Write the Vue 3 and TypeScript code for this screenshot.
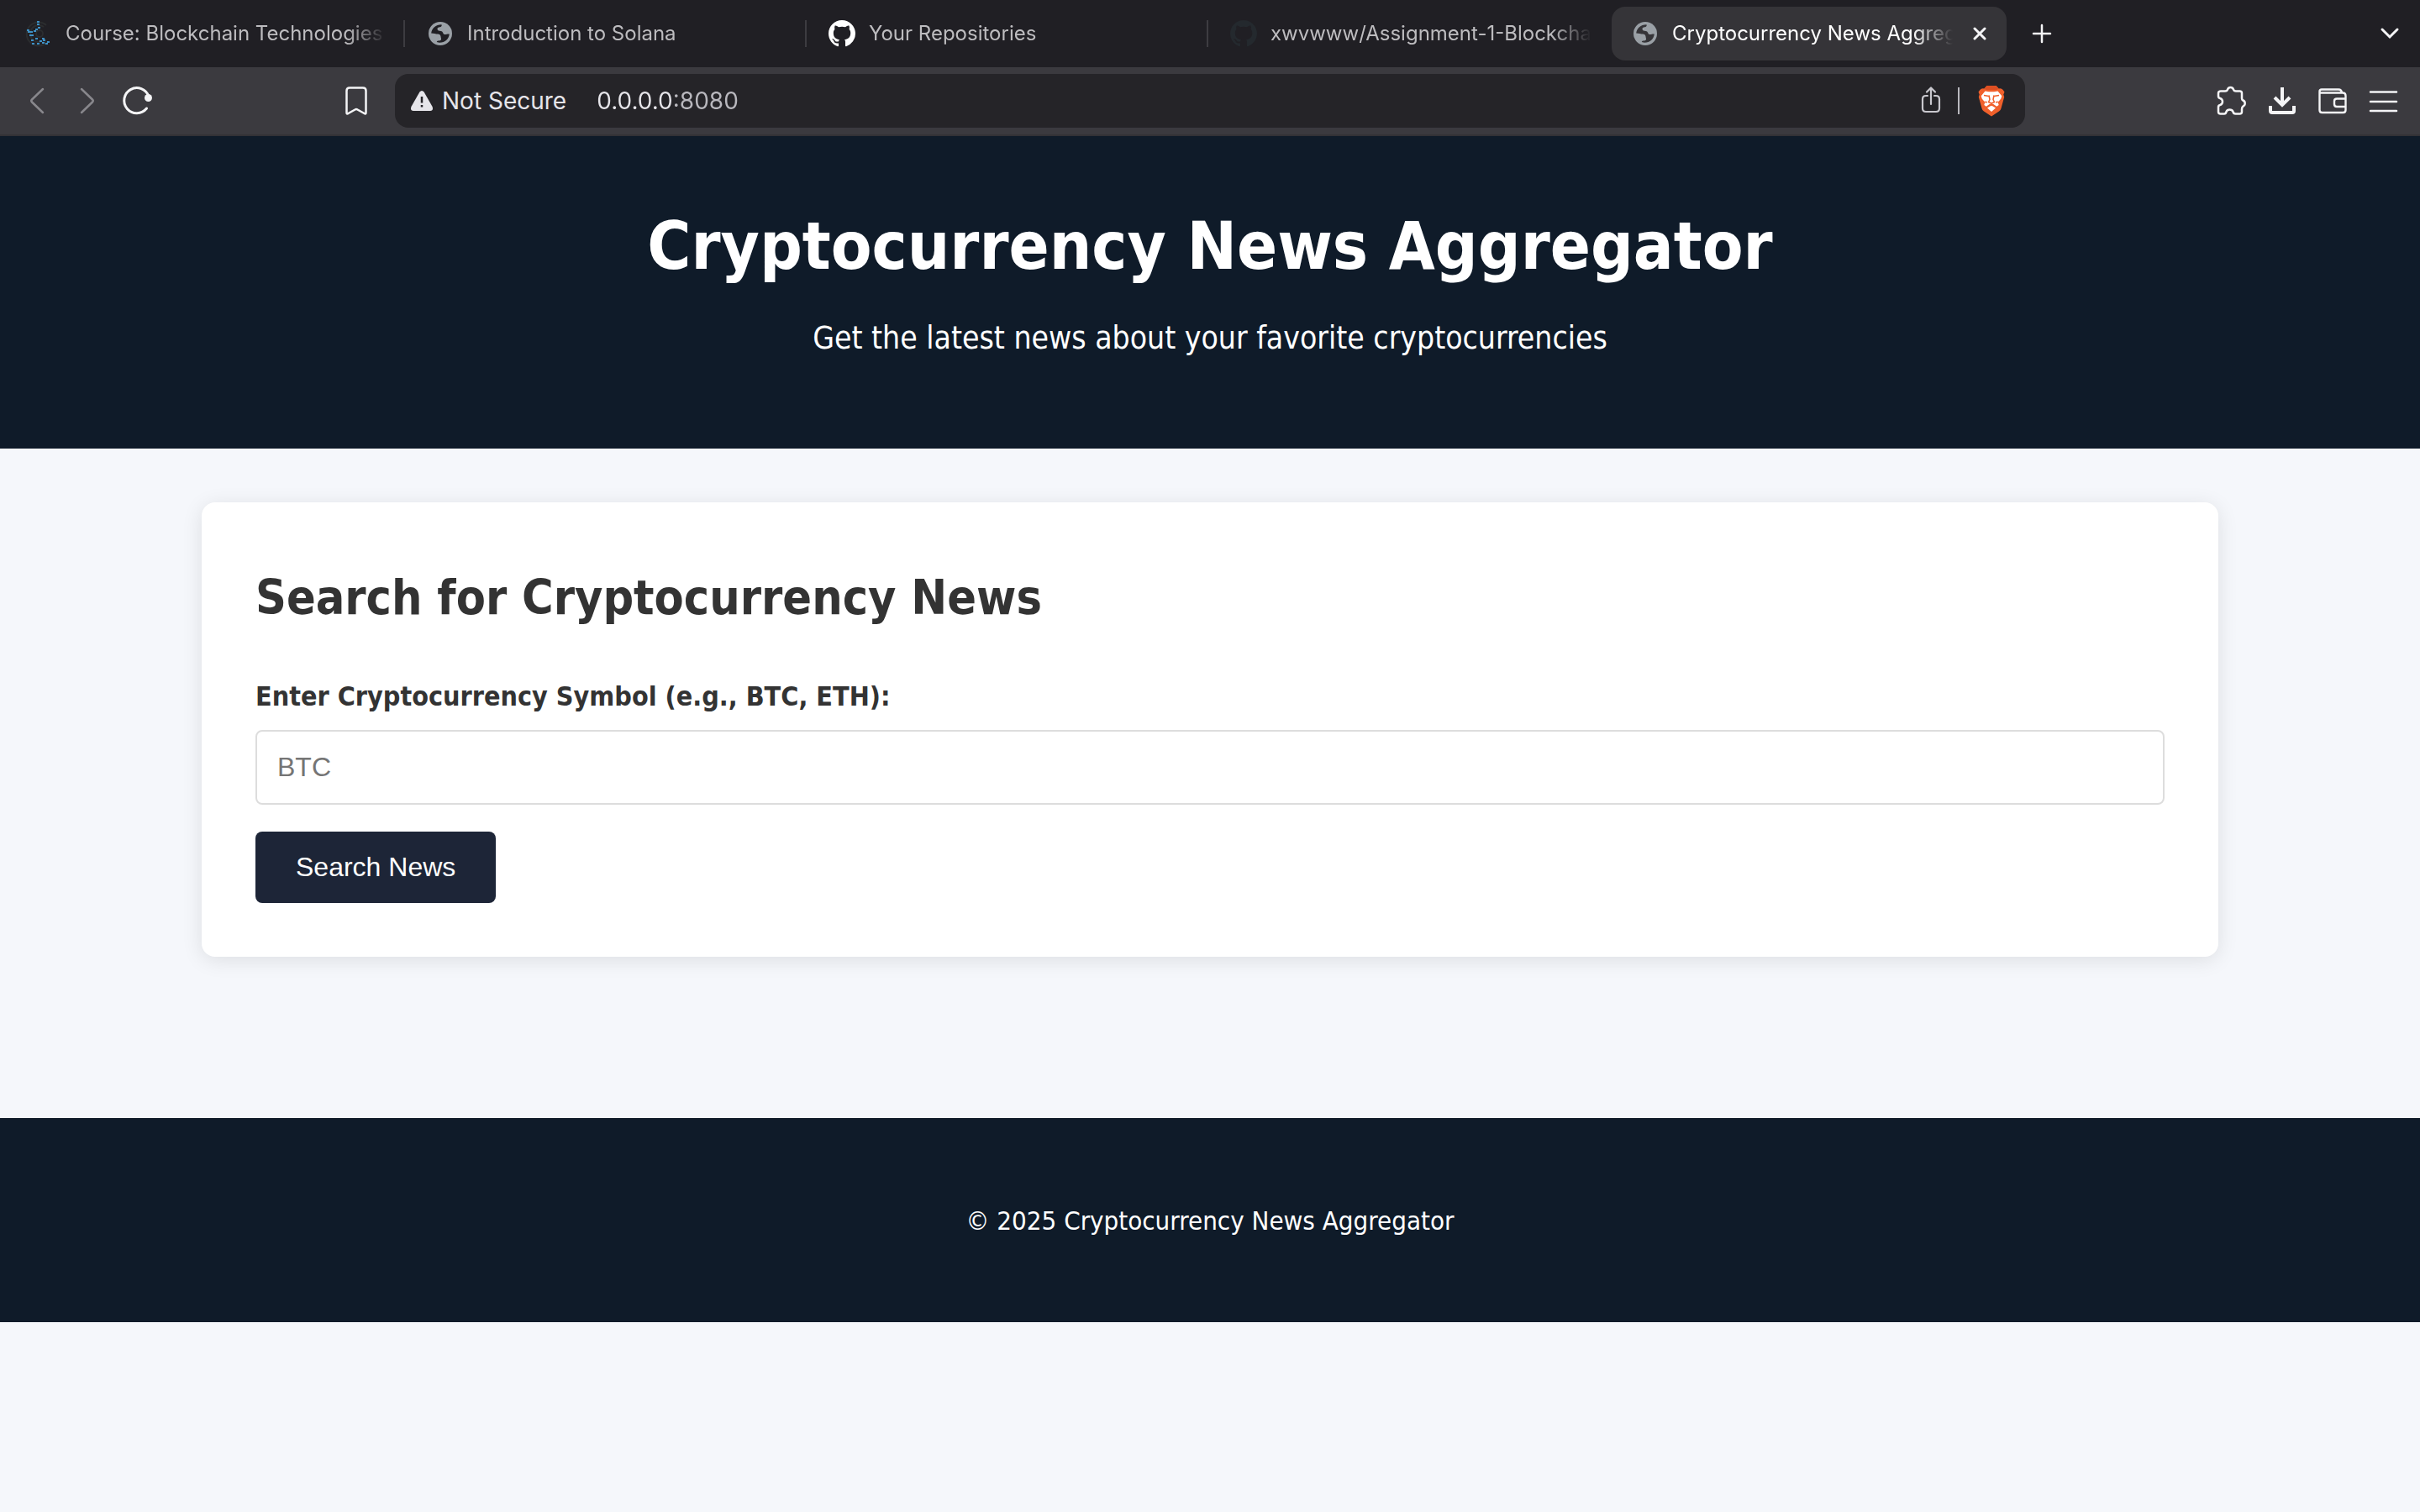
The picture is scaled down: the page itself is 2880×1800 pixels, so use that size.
<script setup lang="ts">
import { ref } from 'vue'

type Favicon = 'course' | 'globe' | 'github' | 'github-dark'

interface Tab {
  title: string
  icon: Favicon
}

const tabs: Tab[] = [
  { title: 'Course: Blockchain Technologies', icon: 'course' },
  { title: 'Introduction to Solana', icon: 'globe' },
  { title: 'Your Repositories', icon: 'github' },
  { title: 'xwvwww/Assignment-1-Blockchain', icon: 'github-dark' },
  { title: 'Cryptocurrency News Aggregator', icon: 'globe' },
]
const activeTab = ref(4)

const courseDots: [number, number][] = [
  [14, 1], [14, 4], [15, 8], [12, 10], [2, 11], [3, 13], [6, 13], [10, 12], [5, 17], [7, 17],
  [12, 21], [7, 23], [8, 27], [14, 27], [17, 24], [20, 21], [21, 23], [20, 26], [24, 27], [26, 25],
]

const address = ref('0.0.0.0:8080')
const symbol = ref('')
</script>

<template>
  <div class="browser">
    <nav class="tab-strip" aria-label="Tabs">
      <div v-for="(tab, i) in tabs" :key="i" class="tab" :class="{ active: i === activeTab }">
        <button class="tab-main" type="button" @click="activeTab = i">
          <svg v-if="tab.icon === 'course'" class="favicon" viewBox="0 0 32 32" aria-hidden="true">
            <g fill="none" stroke="#2b2d2f" stroke-width="2">
              <path d="M25 6A14 14 0 1 0 26 26" />
              <path d="M22 8A10 10 0 1 0 24 22" />
              <circle cx="17" cy="16" r="4" />
            </g>
            <rect v-for="([x, y], d) in courseDots" :key="d" :x="x" :y="y" width="3" height="2" fill="#3d8fc4" />
          </svg>
          <svg v-else-if="tab.icon === 'globe'" class="favicon" viewBox="-2 -2 32 32" aria-hidden="true">
            <circle cx="14" cy="14" r="14" fill="#9aa0a6" />
            <path
              class="globe-cut"
              d="M3.2 13.5C3.8 7.500 8.500 3.400 15.500 3.200 16.200 5 15 6 13.500 6.200 11.500 6.500 10.300 7.200 10.500 8.800 10.700 10.500 12.500 11 14.500 11 17.500 11 16.800 14.600 19 15 21 15.400 22 14.200 24.800 14.500 24.200 20 20 24.800 13 24.800L9.800 24C10 22.500 11 22.600 12.500 22.500 14.500 22.400 15.200 21.500 15 20 14.800 19 14.600 18.500 14.500 17.500 14.300 15.500 13 14.500 11 14.500 9 14.500 6 13.800 3.200 13.500Z"
            />
          </svg>
          <svg v-else class="favicon" viewBox="0 0 16 16" aria-hidden="true">
            <path
              :fill="tab.icon === 'github' ? '#ffffff' : '#24292e'"
              d="M8 0C3.580 0 0 3.580 0 8c0 3.540 2.290 6.530 5.470 7.590.4.070.550-.170.550-.380 0-.190-.010-.820-.010-1.490-2.010.370-2.530-.490-2.690-.940-.090-.230-.480-.940-.820-1.130-.280-.150-.680-.520-.010-.530.630-.010 1.080.580 1.230.820.720 1.210 1.870.870 2.330.660.070-.520.280-.870.510-1.070-1.780-.2-3.640-.890-3.640-3.950 0-.870.310-1.590.820-2.150-.080-.2-.360-1.020.080-2.120 0 0 .670-.210 2.200.820.640-.180 1.320-.270 2-.270s1.360.090 2 .270c1.530-1.040 2.200-.820 2.200-.820.440 1.100.160 1.920.080 2.120.510.560.820 1.270.820 2.150 0 3.070-1.870 3.750-3.650 3.950.290.250.540.730.540 1.480 0 1.070-.010 1.930-.010 2.200 0 .210.150.460.550.380A8.010 8.010 0 0 0 16 8c0-4.420-3.580-8-8-8Z"
            />
          </svg>
          <span class="tab-title">{{ tab.title }}</span>
        </button>
        <button v-if="i === activeTab" class="tab-close" type="button" aria-label="Close tab">
          <svg width="16" height="16" viewBox="0 0 16 16" aria-hidden="true">
            <path d="M2 2l12 12M14 2 2 14" stroke="#f4f4f6" stroke-width="3" stroke-linecap="round" />
          </svg>
        </button>
      </div>
      <button class="icon-button new-tab" type="button" aria-label="New tab">
        <svg width="24" height="24" viewBox="0 0 24 24" aria-hidden="true">
          <path d="M12 2v20M2 12h20" stroke="#f4f4f6" stroke-width="2.500" stroke-linecap="round" />
        </svg>
      </button>
      <button class="icon-button tab-search" type="button" aria-label="Search tabs">
        <svg width="24" height="24" viewBox="0 0 24 24" fill="none" aria-hidden="true">
          <path d="M3 7l9 9 9-9" stroke="#f4f4f6" stroke-width="3" stroke-linecap="round" />
        </svg>
      </button>
    </nav>

    <div class="toolbar">
      <div class="tools">
        <button class="icon-button" type="button" aria-label="Back">
          <svg width="40" height="40" viewBox="0 0 40 40" fill="none" aria-hidden="true">
            <path d="M27 6 14 18.500Q12.500 20 14 21.500L27 34" stroke="#88878c" stroke-width="2.500" stroke-linecap="round" />
          </svg>
        </button>
        <button class="icon-button" type="button" aria-label="Forward">
          <svg width="40" height="40" viewBox="0 0 40 40" fill="none" aria-hidden="true">
            <path d="M13 6 26 18.500Q27.500 20 26 21.500L13 34" stroke="#88878c" stroke-width="2.500" stroke-linecap="round" />
          </svg>
        </button>
        <button class="icon-button" type="button" aria-label="Reload">
          <svg width="40" height="40" viewBox="0 0 40 40" fill="none" aria-hidden="true">
            <path d="M33 15A15 15 0 1 0 30.500 29" stroke="#f4f4f6" stroke-width="3" stroke-linecap="round" />
            <circle cx="32.500" cy="16.500" r="4.500" fill="#f4f4f6" />
          </svg>
        </button>
        <button class="icon-button bookmark" type="button" aria-label="Bookmark this page">
          <svg width="40" height="40" viewBox="0 0 40 40" fill="none" aria-hidden="true">
            <path
              d="M12 4.500h16Q31.500 4.500 31.500 8v26q0 2.500-2 1L21.500 30.500Q20 29.500 18.500 30.500L10.500 35q-2 1.500-2-1V8Q8.500 4.500 12 4.500Z"
              stroke="#f4f4f6"
              stroke-width="2.500"
            />
          </svg>
        </button>
      </div>

      <div class="address-bar">
        <button class="security" type="button">
          <svg width="28" height="26" viewBox="0 0 28 26" aria-hidden="true">
            <path d="M11.400 2.500Q14-.5 16.600 2.500L26.600 20Q28 25 24 25H4Q0 25 1.400 20Z" fill="#e6e5ea" />
            <path d="M14 8v7.500M14 18v2.500" stroke="#252428" stroke-width="2.500" />
          </svg>
          <span>Not Secure</span>
        </button>
        <input v-model="address" class="address" type="text" aria-label="Address" spellcheck="false" />
        <button class="icon-button" type="button" aria-label="Share">
          <svg width="40" height="40" viewBox="0 0 40 40" fill="none" stroke="#c9c8ce" stroke-width="2.200" stroke-linecap="round" stroke-linejoin="round" aria-hidden="true">
            <path d="M16 14h-2q-4 0-4 4v11q0 4 4 4h12q4 0 4-4V18q0-4-4-4h-2" />
            <path d="M20 24V5M15 9.500l5-5 5 5" />
          </svg>
        </button>
        <span class="divider"></span>
        <button class="icon-button" type="button" aria-label="Brave Shields">
          <svg width="40" height="40" viewBox="0 0 40 40" aria-hidden="true">
            <path
              d="M14.500 2h11l3.200 3.500q3.300-.6 5 1.500l1.800 2.500-1.200 3 .9 3L31.500 29Q31 31 29 32.500L20 38.500 11 32.500Q9 31 8.500 29L4.800 15.500l.9-3-1.200-3L6.300 7q1.700-2.100 5-1.500Z"
              fill="#f0602b"
            />
            <path d="M14.500 2h11l3.200 3.500L26 7H14l-2.700-1.500Z" fill="#dd4f22" />
            <path
              d="M12.500 8.500 17 9.200h6l4.500-.7 4.800 5.700-1 3.300-3.600 4.300 1 3.200-2.500 1.700-4.200-3h-4l-4.200 3-2.500-1.700 1-3.200-3.600-4.300-1-3.300Z"
              fill="#fff"
            />
            <path d="M15 28.500 20 25.500l5 3-5 4.500Z" fill="#fff" />
            <path
              d="M11 13.500 17 14.500M29 13.500 23 14.500M17 13.500l1 5-1.500 3 3.500 1.500 3.500-1.500-1.500-3 1-5M20 23v3"
              fill="none"
              stroke="#f0602b"
              stroke-width="1.500"
              stroke-linejoin="round"
            />
            <path d="M11.500 20.500l4 .5-2 2Z M28.500 20.500l-4 .5 2 2Z" fill="#f0602b" />
          </svg>
        </button>
      </div>

      <div class="tools tools-end">
        <button class="icon-button" type="button" aria-label="Extensions">
          <svg width="40" height="40" viewBox="0 0 40 40" fill="none" stroke="#f4f4f6" stroke-width="2.500" stroke-linejoin="round" aria-hidden="true">
            <path
              d="M7 8.500h5q2.500 0 3-2Q16 4 18.500 4T22 6.500q.5 2 3 2h4.500q2.500 0 2.500 2.500v5.500q0 2.500 1.500 3 2.200 1 2.200 3.500t-2.200 3.500Q32 27.500 32 30v3q0 2.500-2.500 2.500h-5q-2.500 0-3-2.500-1-2.500-4-2.500t-4 2.500q-.5 2.500-2.500 2.500H6.500Q4 35.500 4 33v-5.500q0-2 2-2.500 3-1 3-4t-3-4q-2-.5-2-2.500V11Q4 8.500 7 8.500Z"
            />
          </svg>
        </button>
        <button class="icon-button" type="button" aria-label="Downloads">
          <svg width="40" height="40" viewBox="0 0 40 40" fill="none" stroke="#f4f4f6" stroke-width="4" aria-hidden="true">
            <path d="M20 4v21M11 16l9 9 9-9" />
            <path d="M6 26v6q0 2 2 2h24q2 0 2-2v-6" />
          </svg>
        </button>
        <button class="icon-button" type="button" aria-label="Wallet">
          <svg width="40" height="40" viewBox="0 0 40 40" fill="none" stroke="#f4f4f6" stroke-width="2.400" stroke-linejoin="round" aria-hidden="true">
            <path d="M4.500 10.500V31q0 3 3 3h25q3 0 3-3V14q0-3.500-3.500-3.500H4.500V9q0-2.500 2.500-2.500h20q3.500 0 4 4" />
            <path d="M35.500 17.500H25q-3 0-3 3v3.500q0 3 3 3h10.500" />
          </svg>
        </button>
        <button class="icon-button" type="button" aria-label="Menu">
          <svg width="40" height="40" viewBox="0 0 40 40" aria-hidden="true">
            <path d="M5 9.500h31M5 21h31M5 32h31" stroke="#f4f4f6" stroke-width="2.500" stroke-linecap="round" />
          </svg>
        </button>
      </div>
    </div>

    <header class="hero">
      <h1>Cryptocurrency News Aggregator</h1>
      <p>Get the latest news about your favorite cryptocurrencies</p>
    </header>

    <main class="content">
      <section class="card">
        <h2>Search for Cryptocurrency News</h2>
        <form @submit.prevent>
          <label for="symbol">Enter Cryptocurrency Symbol (e.g., BTC, ETH):</label>
          <input id="symbol" v-model="symbol" class="symbol" type="text" placeholder="BTC" />
          <button class="submit" type="submit">Search News</button>
        </form>
      </section>
    </main>

    <footer class="footer">
      <p>© 2025 Cryptocurrency News Aggregator</p>
    </footer>
  </div>
</template>

<style>
body {
  margin: 0;
  background: #f5f7fb;
}
</style>

<style scoped>
.browser {
  color: #333;
  font-family: 'DejaVu Sans Condensed', 'DejaVu Sans', sans-serif;
}

button {
  margin: 0;
  padding: 0;
  border: 0;
  background: none;
  color: inherit;
  font: inherit;
}

svg {
  display: block;
  flex: none;
}

h1,
h2,
p {
  margin: 0;
}

/* Tab strip */
.tab-strip {
  display: flex;
  align-items: center;
  height: 80px;
  padding: 0 16px 0 4px;
  background: #201f24;
  color: #bdbcbf;
  font-family: Inter, sans-serif;
  font-size: 24px;
}

.tab {
  display: flex;
  align-items: center;
  box-sizing: border-box;
  flex: 0 1 478px;
  min-width: 0;
  height: 32px;
  padding: 0 20px 0 26px;
  border-right: 2px solid #3d3c41;
}

.tab:nth-child(4) {
  border-right-color: transparent;
}

.tab.active {
  flex-basis: 470px;
  height: 64px;
  margin-left: 2px;
  padding: 0 24px;
  border: 0;
  border-radius: 16px;
  background: #353438;
  color: #fff;
}

.tab-main {
  display: flex;
  flex: 1;
  align-items: center;
  gap: 16px;
  min-width: 0;
  text-align: left;
}

.favicon {
  width: 32px;
  height: 32px;
}

.globe-cut {
  fill: #201f24;
}

.active .globe-cut {
  fill: #353438;
}

.tab-title {
  flex: 1;
  overflow: hidden;
  line-height: 32px;
  white-space: nowrap;
  mask-image: linear-gradient(90deg, #000 calc(100% - 48px), transparent);
}

.tab-close {
  margin-left: 24px;
}

.icon-button {
  display: grid;
  flex: none;
  place-items: center;
  width: 40px;
  height: 40px;
}

.new-tab {
  margin-left: 22px;
}

.tab-search {
  margin-left: auto;
}

/* Toolbar */
.toolbar {
  display: grid;
  grid-template-columns: 470px 1fr 470px;
  align-items: center;
  height: 80px;
  border-bottom: 2px solid #333236;
  background: #3b3a3f;
  font-family: Inter, sans-serif;
  font-size: 28px;
}

.tools {
  display: flex;
  gap: 20px;
  padding: 0 26px 0 24px;
}

.tools-end {
  justify-content: flex-end;
  padding: 0 24px;
}

.bookmark {
  margin-left: auto;
}

.address-bar {
  display: flex;
  align-items: center;
  height: 64px;
  padding: 0 20px 0 18px;
  border-radius: 16px;
  background: #252428;
  color: #e6e5ea;
}

.security {
  display: flex;
  align-items: center;
  gap: 10px;
}

.address {
  flex: 1;
  min-width: 0;
  margin: 0 0 0 36px;
  padding: 0;
  border: 0;
  outline: 0;
  background: linear-gradient(90deg, #e6e5ea 92px, #b9b8be 92px);
  background-clip: text;
  color: transparent;
  font: inherit;
}

.divider {
  width: 2px;
  height: 32px;
  margin: 0 18px 0 12px;
  background: #b9b8be;
}

/* Page header */
.hero {
  padding: 67px 64px 101px;
  background: #0f1b29;
  color: #fff;
  text-align: center;
}

.hero h1 {
  margin-bottom: 16px;
  font-size: 79px;
  line-height: 128px;
}

.hero p {
  font-size: 37px;
  line-height: 60px;
}

/* Search card */
.content {
  width: calc(100% - 128px);
  max-width: 2400px;
  margin: 64px auto 192px;
}

.card {
  padding: 67px 64px 64px;
  border-radius: 16px;
  background: #fff;
  box-shadow: 0 4px 24px rgba(0, 0, 0, 0.1);
}

.card h2 {
  margin-bottom: 48px;
  font-size: 57px;
  line-height: 92px;
}

.card label {
  display: block;
  margin-bottom: 16px;
  font-size: 32px;
  font-weight: bold;
  line-height: 48px;
}

.symbol {
  display: block;
  box-sizing: border-box;
  width: 100%;
  height: 89px;
  padding: 0 24px;
  border: 2px solid #ddd;
  border-radius: 8px;
  background: #fff;
  color: #333;
  font-family: 'Liberation Sans', Arial, sans-serif;
  font-size: 32px;
}

.symbol::placeholder {
  color: #757575;
}

.submit {
  display: block;
  height: 85px;
  margin-top: 32px;
  padding: 0 48px;
  border-radius: 8px;
  background: #1d2537;
  color: #fff;
  font-family: 'Liberation Sans', Arial, sans-serif;
  font-size: 32px;
}

/* Page footer */
.footer {
  padding: 96px 64px 95px;
  background: #0f1b29;
  color: #fff;
  font-size: 31px;
  line-height: 52px;
  text-align: center;
}
</style>
